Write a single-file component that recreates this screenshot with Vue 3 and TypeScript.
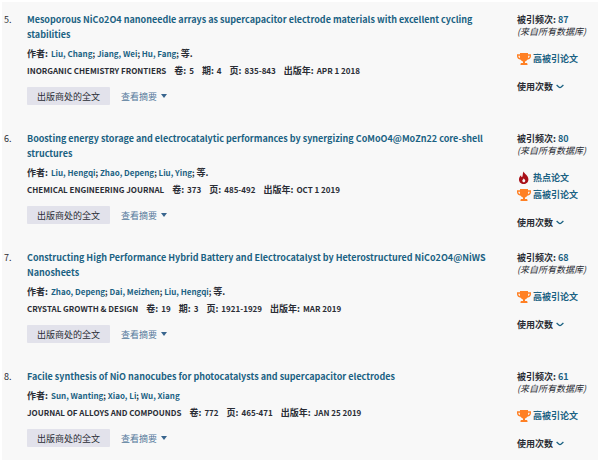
<script setup lang="ts">
interface Field {
  label: string
  value: string
}

interface Paper {
  id: number
  title: string
  authors: string[]
  more: boolean
  journal: string
  fields: Field[]
  cited: number
  hot: boolean
}

const papers: Paper[] = [
  {
    id: 5,
    title: 'Mesoporous NiCo2O4 nanoneedle arrays as supercapacitor electrode materials with excellent cycling stabilities',
    authors: ['Liu, Chang', 'Jiang, Wei', 'Hu, Fang'],
    more: true,
    journal: 'INORGANIC CHEMISTRY FRONTIERS',
    fields: [
      { label: '卷:', value: '5' },
      { label: '期:', value: '4' },
      { label: '页:', value: '835-843' },
      { label: '出版年:', value: 'APR 1 2018' },
    ],
    cited: 87,
    hot: false,
  },
  {
    id: 6,
    title: 'Boosting energy storage and electrocatalytic performances by synergizing CoMoO4@MoZn22 core-shell structures',
    authors: ['Liu, Hengqi', 'Zhao, Depeng', 'Liu, Ying'],
    more: true,
    journal: 'CHEMICAL ENGINEERING JOURNAL',
    fields: [
      { label: '卷:', value: '373' },
      { label: '页:', value: '485-492' },
      { label: '出版年:', value: 'OCT 1 2019' },
    ],
    cited: 80,
    hot: true,
  },
  {
    id: 7,
    title: 'Constructing High Performance Hybrid Battery and Electrocatalyst by Heterostructured NiCo2O4@NiWS Nanosheets',
    authors: ['Zhao, Depeng', 'Dai, Meizhen', 'Liu, Hengqi'],
    more: true,
    journal: 'CRYSTAL GROWTH & DESIGN',
    fields: [
      { label: '卷:', value: '19' },
      { label: '期:', value: '3' },
      { label: '页:', value: '1921-1929' },
      { label: '出版年:', value: 'MAR 2019' },
    ],
    cited: 68,
    hot: false,
  },
  {
    id: 8,
    title: 'Facile synthesis of NiO nanocubes for photocatalysts and supercapacitor electrodes',
    authors: ['Sun, Wanting', 'Xiao, Li', 'Wu, Xiang'],
    more: false,
    journal: 'JOURNAL OF ALLOYS AND COMPOUNDS',
    fields: [
      { label: '卷:', value: '772' },
      { label: '页:', value: '465-471' },
      { label: '出版年:', value: 'JAN 25 2019' },
    ],
    cited: 61,
    hot: false,
  },
]
</script>

<template>
  <main class="results">
    <article v-for="paper in papers" :key="paper.id" class="record">
      <span class="number">{{ paper.id }}.</span>

      <div class="content">
        <h2 class="title"><a href="#">{{ paper.title }}</a></h2>
        <p class="authors">
          <span class="label">作者:</span>
          <span class="names">
            <template v-for="(author, i) in paper.authors" :key="author">
              <a href="#">{{ author }}</a><template v-if="i < paper.authors.length - 1 || paper.more">; </template>
            </template>
            <span v-if="paper.more" class="label">等.</span>
          </span>
        </p>
        <p class="source">
          <span class="journal">{{ paper.journal }}</span>
          <span class="fields">
            <span v-for="field in paper.fields" :key="field.label" class="field">
              <span class="label">{{ field.label }}</span>
              <span>{{ field.value }}</span>
            </span>
          </span>
        </p>
        <div class="actions">
          <button type="button" class="fulltext">出版商处的全文</button>
          <button type="button" class="abstract">
            查看摘要
            <svg class="caret" viewBox="0 0 6 4" aria-hidden="true"><path d="M0 0h6L3 4z" /></svg>
          </button>
        </div>
      </div>

      <aside class="metrics">
        <p class="cited">被引频次: <a href="#">{{ paper.cited }}</a></p>
        <p class="scope">(来自所有数据库)</p>
        <div class="badges">
          <a v-if="paper.hot" href="#" class="badge">
            <svg class="icon" viewBox="0 0 14 14" aria-hidden="true">
              <path
                fill="#a80f17"
                fill-rule="evenodd"
                d="M6.4 0.6C7.2 2.7 11.4 4.6 11.4 8.4C11.4 11.1 9.3 13 6.7 13S2 11.1 2 8.4C2 6.6 3 5.2 4.1 4.3C4.1 5.5 4.4 6.1 5 6.2C6 5.3 5.5 3 6.4 0.6ZM6.8 7.2C6.7 8.1 5.3 8.6 5.3 9.8C5.3 10.7 6 11.3 6.8 11.3S8.3 10.7 8.3 9.8C8.3 8.7 7.2 8.2 6.8 7.2Z"
              />
            </svg>
            热点论文
          </a>
          <a href="#" class="badge">
            <svg class="icon" viewBox="0 0 14 14" aria-hidden="true">
              <path
                fill="#ff8024"
                fill-rule="evenodd"
                d="M3 1H11V2.3H14V4.2C14 6.2 12.3 7.4 10.3 7.7C9.6 8.7 8.8 9.2 8 9.5V11H9.2C10 11 10.5 11.5 10.5 12.2V13H3.5V12.2C3.5 11.5 4 11 4.8 11H6V9.5C5.2 9.2 4.4 8.7 3.7 7.7C1.7 7.4 0 6.2 0 4.2V2.3H3ZM1.4 3.7V4.2C1.4 5 2 5.7 3 6C2.9 5.3 2.9 4.5 2.9 3.7ZM12.6 3.7H11.1C11.1 4.5 11.1 5.3 11 6C12 5.7 12.6 5 12.6 4.2Z"
              />
            </svg>
            高被引论文
          </a>
        </div>
        <button type="button" class="usage">
          使用次数
          <svg class="chevron" viewBox="0 0 8 5" aria-hidden="true"><path d="M0.6 1L2.8 3Q4 4 5.2 3L7.4 1" /></svg>
        </button>
      </aside>
    </article>
  </main>
</template>

<style>
body {
  margin: 0;
  background: #ffffff;
}
</style>

<style scoped>
.results {
  margin: 2px 2px 1px;
  padding-top: 10px;
  background: #f8f8f8;
  color: #2a2d35;
  font-family: "Noto Sans CJK SC", "Noto Sans", sans-serif;
  font-size: 9px;
  line-height: 15px;
}

.record {
  display: grid;
  grid-template-columns: 23px minmax(0, 1fr) 81px;
  min-height: 119px;
}

.record:last-child {
  min-height: 91px;
}

.number {
  padding-left: 2px;
}

.content {
  padding: 0 20px 0 2px;
}

h2,
p {
  margin: 0;
}

a {
  color: #1b6283;
  text-decoration: none;
}

button {
  padding: 0;
  border: 0;
  background: none;
  color: inherit;
  font: inherit;
  cursor: pointer;
}

.title {
  font-size: 9px;
  font-weight: 700;
}

.label {
  font-size: 9px;
}

.authors,
.source {
  display: flex;
  align-items: baseline;
  font-size: 8px;
  font-weight: 700;
}

.authors {
  gap: 3px;
  margin-top: 4px;
}

.source {
  gap: 8px;
  margin-top: 2px;
}

.fields {
  display: flex;
  align-items: baseline;
  gap: 8px;
}

.field {
  display: flex;
  align-items: baseline;
  gap: 3px;
}

.actions {
  display: flex;
  align-items: center;
  gap: 11px;
  margin-top: 9px;
}

.fulltext {
  height: 18px;
  padding: 0 10px;
  border-radius: 1px;
  background: #e2e2eb;
}

.abstract {
  display: flex;
  align-items: center;
  gap: 4px;
  color: #54799b;
}

.caret {
  width: 6px;
  height: 4px;
  fill: #39658e;
}

.cited {
  font-weight: 700;
}

.scope {
  font-style: italic;
  line-height: 10px;
}

.badges {
  margin: 13px 0 12px;
}

.badge {
  display: flex;
  align-items: center;
  gap: 2px;
  height: 17px;
  font-weight: 700;
}

.icon {
  width: 14px;
  height: 14px;
}

.usage {
  display: flex;
  align-items: center;
  gap: 3px;
  font-weight: 700;
}

.chevron {
  width: 8px;
  height: 5px;
  fill: none;
  stroke: #1b6283;
  stroke-width: 1.3;
}
</style>
